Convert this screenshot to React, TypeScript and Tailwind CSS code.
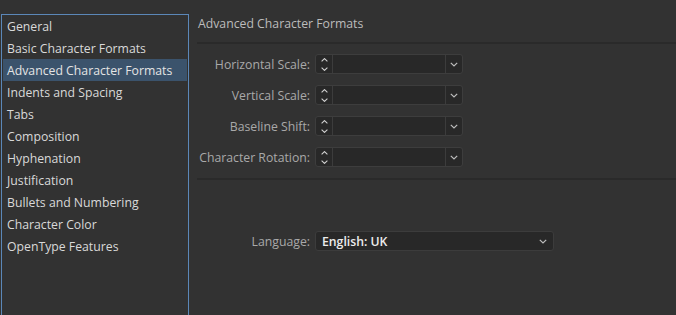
import React from "react";

const items = [
  "General",
  "Basic Character Formats",
  "Advanced Character Formats",
  "Indents and Spacing",
  "Tabs",
  "Composition",
  "Hyphenation",
  "Justification",
  "Bullets and Numbering",
  "Character Color",
  "OpenType Features",
];

function ChevronDown({ className = "" }: { className?: string }) {
  return (
    <svg width="8" height="5" viewBox="0 0 8 5" className={className}>
      <path d="M0.8 0.8 L4 4 L7.2 0.8" fill="none" stroke="currentColor" strokeWidth="1.2" />
    </svg>
  );
}

function Stepper() {
  return (
    <div className="flex flex-col items-center justify-center gap-[5px] w-[17px] h-full border-r border-[#3c3c3c] text-[#d0d0d0]">
      <svg width="7" height="4" viewBox="0 0 7 4">
        <path d="M0.6 3.4 L3.5 0.6 L6.4 3.4" fill="none" stroke="currentColor" strokeWidth="1.1" />
      </svg>
      <svg width="7" height="4" viewBox="0 0 7 4">
        <path d="M0.6 0.6 L3.5 3.4 L6.4 0.6" fill="none" stroke="currentColor" strokeWidth="1.1" />
      </svg>
    </div>
  );
}

function ComboField() {
  return (
    <div className="flex h-[20px] w-[148px] rounded-[3px] border border-[#3d3d3d] bg-[#282828]">
      <Stepper />
      <div className="flex-1" />
      <div className="flex items-center justify-center w-[17px] h-full border-l border-[#3c3c3c] text-[#bdbdbd]">
        <ChevronDown />
      </div>
    </div>
  );
}

export default function App() {
  const rows = ["Horizontal Scale:", "Vertical Scale:", "Baseline Shift:", "Character Rotation:"];
  return (
    <div
      className="w-[676px] h-[315px] bg-[#323232] overflow-hidden flex text-[12.25px] leading-[17px]"
      style={{ fontFamily: '"Open Sans", "DejaVu Sans", sans-serif' }}
    >
      {/* Sidebar */}
      <div className="ml-px mt-[14px] w-[188px] h-[320px] shrink-0 border border-[#5b87b8] bg-[#323232] flex flex-col">
        {items.map((it) => (
          <div
            key={it}
            className={
              "h-[22px] flex items-center mx-px pl-[4px] whitespace-nowrap font-medium " +
              (it === "Advanced Character Formats" ? "bg-[#3b536c] text-[#e4e4e4]" : "text-[#d9d9d9]")
            }
          >
            {it}
          </div>
        ))}
      </div>

      {/* Main */}
      <div className="flex-1 flex flex-col min-w-0">
        <div className="h-[42px] flex flex-col">
          <div className="-mt-[16px] h-[17px] pl-[12px] text-[#8a8a8a] whitespace-nowrap">
            [Basic Paragraph Style (copy)]
          </div>
          <div className="mt-[14px] pl-[9px] text-[#bcbcbc]">Advanced Character Formats</div>
        </div>
        <div className="ml-[8px] h-[2px] bg-[#2a2a2a]" />

        <div className="pt-[10px] pl-[9px] flex flex-col gap-[11px]">
          {rows.map((r) => (
            <div key={r} className="flex items-center gap-[5px]">
              <div className="w-[112px] text-right text-[#a9a9a9] whitespace-nowrap">{r}</div>
              <ComboField />
            </div>
          ))}
        </div>

        <div className="mt-[11px] ml-[8px] h-[2px] bg-[#2a2a2a]" />

        <div className="mt-[51px] pl-[9px] flex items-center gap-[5px]">
          <div className="w-[112px] text-right text-[#a9a9a9]">Language:</div>
          <div className="flex items-center h-[20px] w-[239px] rounded-[3px] border border-[#3c3c3c] bg-[#282828] pl-[6px] pr-[6px]">
            <span className="flex-1 text-[#ececec] font-semibold">English: UK</span>
            <ChevronDown className="text-[#bdbdbd]" />
          </div>
        </div>
      </div>
    </div>
  );
}
